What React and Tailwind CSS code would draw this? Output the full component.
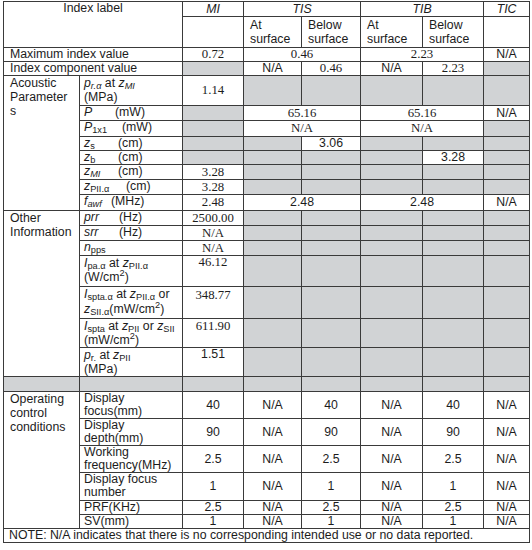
const Td = ({ children, className = "", ...rest }) => (
  <td className={"border border-[#3a3a3a] p-0 " + className} {...rest}>
    {children}
  </td>
);

const Gray = (props) => <Td className="bg-[#d1d3d5]" {...props} />;
const Num = ({ children, ...rest }) => (
  <Td className="text-center text-[12.8px] font-['Liberation_Serif',serif]" {...rest}>
    {children}
  </Td>
);
const Val = ({ children, ...rest }) => (
  <Td className="text-center" {...rest}>
    {children}
  </Td>
);
const Label = ({ children, className = "" }) => (
  <Td className={"pl-[4px] align-top " + className}>{children}</Td>
);
const Unit = ({ w, children }) => <span className={"inline-block " + w}>{children}</span>;

const i = "italic";

const App = () => {
  return (
    <div className="bg-white w-[532px] h-[550px] pt-[1px] pl-[3px] text-[#1c1c1c] font-['Liberation_Sans',Arial,sans-serif]">
      <table className="table-fixed border-collapse w-[526px] text-[12.3px] leading-[13px]">
        <colgroup>
          <col className="w-[76px]" />
          <col className="w-[103px]" />
          <col className="w-[61px]" />
          <col className="w-[58px]" />
          <col className="w-[59px]" />
          <col className="w-[62px]" />
          <col className="w-[61px]" />
          <col className="w-[46px]" />
        </colgroup>
        <tbody>
          {/* HEADER */}
          <tr className="h-[15px]">
            <Td colSpan={2} rowSpan={2} className="text-center align-top">Index label</Td>
            <Td className="text-center italic">MI</Td>
            <Td colSpan={2} className="text-center italic">TIS</Td>
            <Td colSpan={2} className="text-center italic">TIB</Td>
            <Td className="text-center italic">TIC</Td>
          </tr>
          <tr className="h-[31px]">
            <Td />
            <Td className="pl-[6px] leading-[14px]">At<br />surface</Td>
            <Td className="pl-[6px] leading-[14px]">Below<br />surface</Td>
            <Td className="pl-[6px] leading-[14px]">At<br />surface</Td>
            <Td className="pl-[6px] leading-[14px]">Below<br />surface</Td>
            <Td />
          </tr>
          <tr className="h-[13px]">
            <Td colSpan={2} className="pl-[6px]">Maximum index value</Td>
            <Num>0.72</Num>
            <Num colSpan={2}>0.46</Num>
            <Num colSpan={2}>2.23</Num>
            <Val>N/A</Val>
          </tr>
          <tr className="h-[14px]">
            <Td colSpan={2} className="pl-[6px]">Index component value</Td>
            <Gray />
            <Val>N/A</Val>
            <Num>0.46</Num>
            <Val>N/A</Val>
            <Num>2.23</Num>
            <Gray />
          </tr>

          {/* ACOUSTIC PARAMETERS */}
          <tr className="h-[30px]">
            <Td rowSpan={8} className="pl-[6px] align-top leading-[14px]">Acoustic<br />Parameter<br />s</Td>
            <Label className="leading-[14px]">
              <span className={i}>p</span><sub className={i}>r.α</sub> at <span className={i}>z</span><sub className={i}>MI</sub>
              <br />(MPa)
            </Label>
            <Num>1.14</Num>
            <Gray /><Gray /><Gray /><Gray /><Gray />
          </tr>
          <tr className="h-[15px]">
            <Label><Unit w="w-[31px]"><span className={i}>P</span></Unit>(mW)</Label>
            <Gray />
            <Num colSpan={2}>65.16</Num>
            <Num colSpan={2}>65.16</Num>
            <Val>N/A</Val>
          </tr>
          <tr className="h-[16px]">
            <Label><Unit w="w-[38px]"><span className={i}>P</span><sub>1x1</sub></Unit>(mW)</Label>
            <Gray />
            <Num colSpan={2}>N/A</Num>
            <Num colSpan={2}>N/A</Num>
            <Gray />
          </tr>
          <tr className="h-[14px]">
            <Label><Unit w="w-[34px]"><span className={i}>z</span><sub>s</sub></Unit>(cm)</Label>
            <Gray /><Gray />
            <Val>3.06</Val>
            <Gray /><Gray /><Gray />
          </tr>
          <tr className="h-[14px]">
            <Label><Unit w="w-[34px]"><span className={i}>z</span><sub>b</sub></Unit>(cm)</Label>
            <Gray /><Gray /><Gray /><Gray />
            <Val>3.28</Val>
            <Gray />
          </tr>
          <tr className="h-[15px]">
            <Label><Unit w="w-[34px]"><span className={i}>z</span><sub className={i}>MI</sub></Unit>(cm)</Label>
            <Num>3.28</Num>
            <Gray /><Gray /><Gray /><Gray /><Gray />
          </tr>
          <tr className="h-[15px]">
            <Label><Unit w="w-[42px]"><span className={i}>z</span><sub>PII.α</sub></Unit>(cm)</Label>
            <Num>3.28</Num>
            <Gray /><Gray /><Gray /><Gray /><Gray />
          </tr>
          <tr className="h-[16px]">
            <Label><Unit w="w-[27px]"><span className={i}>f</span><sub className={i}>awf</sub></Unit>(MHz)</Label>
            <Num>2.48</Num>
            <Val colSpan={2}>2.48</Val>
            <Val colSpan={2}>2.48</Val>
            <Val>N/A</Val>
          </tr>

          {/* OTHER INFORMATION */}
          <tr className="h-[15px]">
            <Td rowSpan={7} className="pl-[6px] align-top leading-[14px]">Other<br />Information</Td>
            <Label><Unit w="w-[35px]"><span className={i}>prr</span></Unit>(Hz)</Label>
            <Num>2500.00</Num>
            <Gray /><Gray /><Gray /><Gray /><Gray />
          </tr>
          <tr className="h-[15px]">
            <Label><Unit w="w-[35px]"><span className={i}>srr</span></Unit>(Hz)</Label>
            <Num>N/A</Num>
            <Gray /><Gray /><Gray /><Gray /><Gray />
          </tr>
          <tr className="h-[15px]">
            <Label><span className={i}>n</span><sub>pps</sub></Label>
            <Num>N/A</Num>
            <Gray /><Gray /><Gray /><Gray /><Gray />
          </tr>
          <tr className="h-[31px]">
            <Label className="leading-[14px]">
              <span className={i}>I</span><sub>pa.α</sub> at <span className={i}>z</span><sub>PII.α</sub>
              <br />(W/cm<sup>2</sup>)
            </Label>
            <Td className="text-center align-top text-[12.8px] font-['Liberation_Serif',serif]">46.12</Td>
            <Gray /><Gray /><Gray /><Gray /><Gray />
          </tr>
          <tr className="h-[32px]">
            <Label className="leading-[15px]">
              <span className={i}>I</span><sub>spta.α</sub> at <span className={i}>z</span><sub>PII.α</sub> or
              <br /><span className={i}>z</span><sub>SII.α</sub>(mW/cm<sup>2</sup>)
            </Label>
            <Td className="text-center align-top pt-[2px] text-[12.8px] font-['Liberation_Serif',serif]">348.77</Td>
            <Gray /><Gray /><Gray /><Gray /><Gray />
          </tr>
          <tr className="h-[29px]">
            <Label className="leading-[14px]">
              <span className={i}>I</span><sub>spta</sub> at <span className={i}>z</span><sub>PII</sub> or <span className={i}>z</span><sub>SII</sub>
              <br />(mW/cm<sup>2</sup>)
            </Label>
            <Td className="text-center align-top pt-[1px] text-[12.8px] font-['Liberation_Serif',serif]">611.90</Td>
            <Gray /><Gray /><Gray /><Gray /><Gray />
          </tr>
          <tr className="h-[29px]">
            <Label className="leading-[14px]">
              <span className={i}>p</span><sub>r.</sub> at <span className={i}>z</span><sub>PII</sub>
              <br />(MPa)
            </Label>
            <Td className="text-center align-top">1.51</Td>
            <Gray /><Gray /><Gray /><Gray /><Gray />
          </tr>
          <tr className="h-[15px]">
            <Gray /><Gray /><Gray /><Gray /><Gray /><Gray /><Gray /><Gray />
          </tr>

          {/* OPERATING CONTROL CONDITIONS */}
          {[
            ["Display", "focus(mm)", "40", "h-[25px]"],
            ["Display", "depth(mm)", "90", "h-[27px]"],
            ["Working", "frequency(MHz)", "2.5", "h-[27px]"],
            ["Display focus", "number", "1", "h-[28px]"],
            ["PRF(KHz)", null, "2.5", "h-[12px]"],
            ["SV(mm)", null, "1", "h-[12px]"],
          ].map(([a, b, v, h], idx) => (
            <tr key={a + idx} className={h}>
              {idx === 0 && (
                <Td rowSpan={6} className="pl-[6px] align-top leading-[14px]">Operating<br />control<br />conditions</Td>
              )}
              <Label className="leading-[13px]">
                {a}
                {b && <br />}
                {b}
              </Label>
              <Val>{v}</Val>
              <Val>N/A</Val>
              <Val>{v}</Val>
              <Val>N/A</Val>
              <Val>{v}</Val>
              <Val>N/A</Val>
            </tr>
          ))}
          <tr className="h-[14px]">
            <Td colSpan={8} className="pl-[5px]">
              NOTE: N/A indicates that there is no corresponding intended use or no data reported.
            </Td>
          </tr>
        </tbody>
      </table>
    </div>
  );
};

export default App;
